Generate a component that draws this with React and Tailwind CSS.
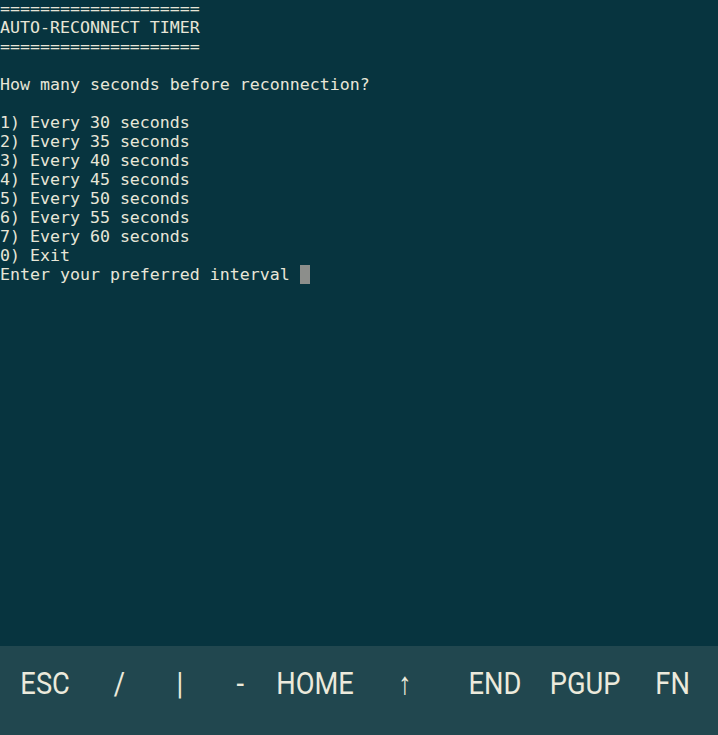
export default function App() {
  const lines = [
    "====================",
    "AUTO-RECONNECT TIMER",
    "====================",
    "",
    "How many seconds before reconnection?",
    "",
    "1) Every 30 seconds",
    "2) Every 35 seconds",
    "3) Every 40 seconds",
    "4) Every 45 seconds",
    "5) Every 50 seconds",
    "6) Every 55 seconds",
    "7) Every 60 seconds",
    "0) Exit",
  ];
  const keys = [
    ["ESC", "w-[90px]"],
    ["/", "w-[58px]"],
    ["|", "w-[64px]"],
    ["-", "w-[56px]"],
    ["HOME", "w-[94px]"],
    ["↑", "w-[86px]"],
    ["END", "w-[94px]"],
    ["PGUP", "w-[86px]"],
    ["FN", "w-[90px]"],
  ];
  return (
    <div className="w-[718px] h-[735px] flex flex-col bg-[#07343f] overflow-hidden">
      <div className="flex-1 overflow-hidden">
        <div className="mt-[-1px] font-['DejaVu_Sans_Mono',monospace] text-[16.6px] leading-[19px] text-[#e8e6d8] whitespace-pre">
          {lines.map((l, i) => (
            <div key={i} className="h-[19px]">{l}</div>
          ))}
          <div className="h-[19px] flex">
            <span>Enter your preferred interval </span>
            <span className="w-[10px] h-[19px] bg-[#8c8e8b]"></span>
          </div>
        </div>
      </div>
      <div className="h-[89px] bg-[#21474f] flex items-start pt-[18px]">
        {keys.map(([k, w]) => (
          <div key={k} className={`${w} flex justify-center`}>
            <span className="font-['Roboto',sans-serif] text-[31px] leading-[40px] text-[#eceadc] scale-x-[0.88] inline-block">
              {k}
            </span>
          </div>
        ))}
      </div>
    </div>
  );
}
